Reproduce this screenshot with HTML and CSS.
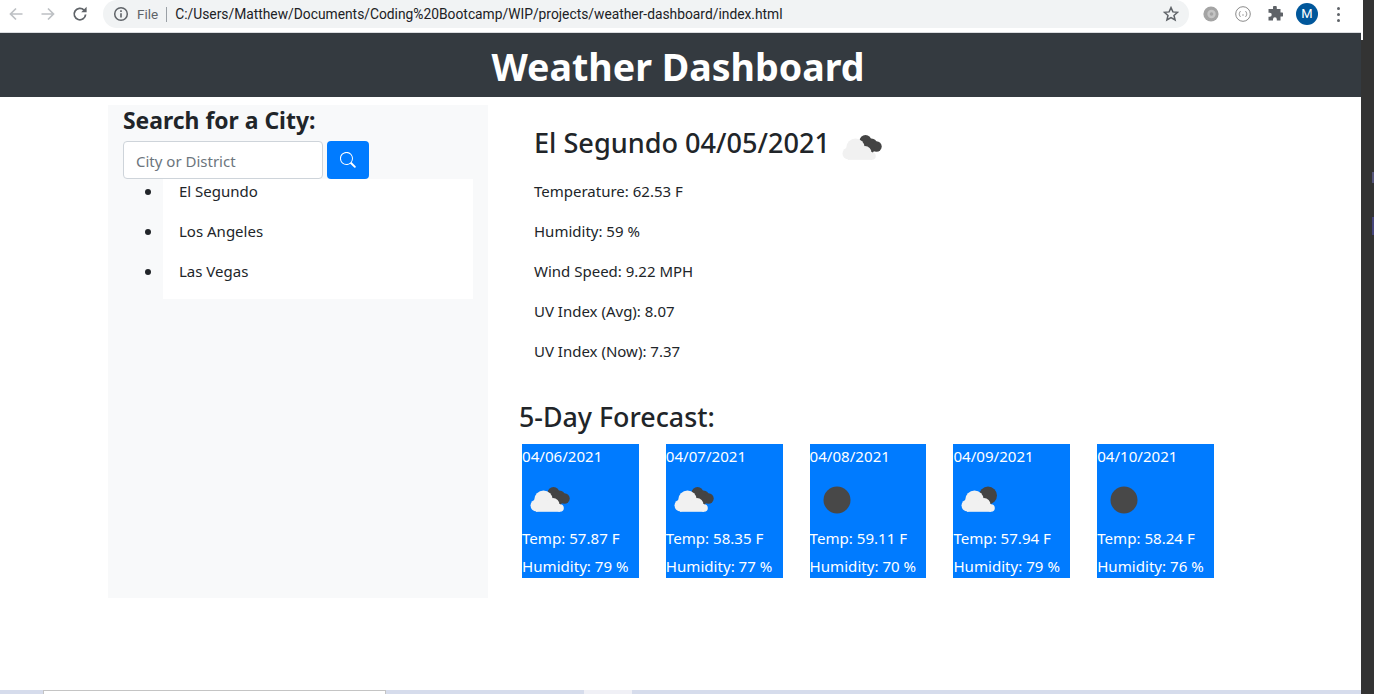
FILE: index.html
```html
<!DOCTYPE html>
<html lang="en">
<head>
<meta charset="utf-8">
<title>Weather Dashboard</title>
<link rel="stylesheet" href="styles.css">
</head>
<body>
<svg class="defs" width="0" height="0" aria-hidden="true">
  <defs>
    <g id="cloud-shape" fill="#f1f1f1">
      <circle cx="12.500" cy="30.500" r="6"/>
      <circle cx="19.500" cy="24.800" r="9.300"/>
      <circle cx="29" cy="29.500" r="6.500"/>
      <circle cx="36" cy="33" r="3.800"/>
      <rect x="12" y="29" width="24" height="7.800"/>
    </g>
    <symbol id="cloud-pair" viewBox="0 0 50 50">
      <g fill="#444">
        <circle cx="29.500" cy="18" r="6"/>
        <circle cx="35.500" cy="21" r="5.500"/>
        <circle cx="40.500" cy="23.500" r="5.200"/>
        <circle cx="33" cy="25" r="6"/>
      </g>
      <use href="#cloud-shape"/>
    </symbol>
    <symbol id="cloud-sun" viewBox="0 0 50 50">
      <circle fill="#444" cx="33" cy="20.500" r="9"/>
      <use href="#cloud-shape"/>
    </symbol>
    <symbol id="sun" viewBox="0 0 50 50">
      <circle fill="#484848" cx="25" cy="25" r="13.500"/>
    </symbol>
  </defs>
</svg>
<div class="screen">
  <div class="window">
    <div class="toolbar">
      <div class="nav-icons">
        <svg class="tb-icon" viewBox="0 0 16 16"><path class="stroke-light" d="M14.500 8H2.500M8 2.500 2.500 8 8 13.500"/></svg>
        <svg class="tb-icon" viewBox="0 0 16 16"><path class="stroke-light" d="M1.500 8h12M8 2.500 13.500 8 8 13.500"/></svg>
        <svg class="tb-icon" viewBox="0 0 16 16"><path class="stroke-dark" d="M13.600 8.500A5.700 5.700 0 1 1 12 4.100"/><path class="fill-dark" d="M9.200 6.200H14.600V.8z"/></svg>
      </div>
      <div class="omnibox">
        <svg class="info-icon" viewBox="0 0 16 16"><circle class="info-ring" cx="8" cy="8" r="6.300"/><path class="info-mark" d="M8 7.200v4.300M8 4.300v1.600"/></svg>
        <span class="scheme">File</span>
        <span class="url">C:/Users/Matthew/Documents/Coding%20Bootcamp/WIP/projects/weather-dashboard/index.html</span>
        <svg class="star-icon" viewBox="0 0 16 16"><path class="star" d="m8 1.600 1.900 4.300 4.700.4-3.600 3.100 1.100 4.600L8 11.600l-4.100 2.400L5 9.400 1.400 6.300l4.700-.4z"/></svg>
      </div>
      <div class="ext-icons">
        <svg class="ext" viewBox="0 0 16 16"><circle class="ext-a" cx="8" cy="8" r="7.600"/><circle class="ext-b" cx="8.500" cy="8" r="4.200"/><circle class="ext-a" cx="8.500" cy="8" r="1.800"/></svg>
        <svg class="ext" viewBox="0 0 16 16"><circle class="ext-ring" cx="8" cy="8" r="7.300"/><path class="ext-code" d="M5.600 5.500q-1 0-1 1v.8l-.8.700.8.700v.8q0 1 1 1M10.400 5.500q1 0 1 1v.8l.8.700-.8.700v.8q0 1-1 1M7.200 9h1.600"/></svg>
        <svg class="ext" viewBox="0 0 16 16"><path class="puzzle" d="M6 1.500a1.900 1.900 0 0 1 3.800 0V3h3.700v3.500H15a2 2 0 0 1 0 4h-1.500v4H9.800v-1.300a1.900 1.900 0 0 0-3.800 0v1.300H1.500v-3.700h1.200a2 2 0 0 0 0-4H1.500V3H6z"/></svg>
        <span class="avatar">M</span>
        <span class="kebab"><i></i><i></i><i></i></span>
      </div>
    </div>
    <header class="site-header"><h1>Weather Dashboard</h1></header>
    <main class="content">
      <aside class="sidebar">
        <h4 class="search-title">Search for a City:</h4>
        <form class="search-form">
          <input class="search-input" type="text" placeholder="City or District">
          <button class="search-btn" type="button" aria-label="Search">
            <svg viewBox="0 0 16 16"><path class="search-glyph" d="M11.700 10.300a6.500 6.500 0 1 0-1.400 1.400l3.900 3.900a1 1 0 0 0 1.400-1.400zM6.500 12A5.500 5.500 0 1 1 6.500 1a5.500 5.500 0 0 1 0 11z"/></svg>
          </button>
        </form>
        <ul class="city-list">
          <li>El Segundo</li>
          <li>Los Angeles</li>
          <li>Las Vegas</li>
        </ul>
      </aside>
      <section class="weather">
        <div class="today">
          <div class="today-head">
            <h2>El Segundo 04/05/2021</h2>
            <svg class="today-icon"><use href="#cloud-pair"/></svg>
          </div>
          <p>Temperature: 62.53 F</p>
          <p>Humidity: 59 %</p>
          <p>Wind Speed: 9.22 MPH</p>
          <p>UV Index (Avg): 8.07</p>
          <p>UV Index (Now): 7.37</p>
        </div>
        <h3 class="forecast-title">5-Day Forecast:</h3>
        <div class="forecast">
          <article class="day">
            <div>04/06/2021</div>
            <svg class="day-icon"><use href="#cloud-pair"/></svg>
            <div class="temp">Temp: 57.87 F</div>
            <div>Humidity: 79 %</div>
          </article>
          <article class="day">
            <div>04/07/2021</div>
            <svg class="day-icon"><use href="#cloud-pair"/></svg>
            <div class="temp">Temp: 58.35 F</div>
            <div>Humidity: 77 %</div>
          </article>
          <article class="day">
            <div>04/08/2021</div>
            <svg class="day-icon"><use href="#sun"/></svg>
            <div class="temp">Temp: 59.11 F</div>
            <div>Humidity: 70 %</div>
          </article>
          <article class="day">
            <div>04/09/2021</div>
            <svg class="day-icon"><use href="#cloud-sun"/></svg>
            <div class="temp">Temp: 57.94 F</div>
            <div>Humidity: 79 %</div>
          </article>
          <article class="day">
            <div>04/10/2021</div>
            <svg class="day-icon"><use href="#sun"/></svg>
            <div class="temp">Temp: 58.24 F</div>
            <div>Humidity: 76 %</div>
          </article>
        </div>
      </section>
    </main>
    <div class="tabstrip">
      <span class="seg-a"></span><span class="seg-tab"></span><span class="seg-b"></span><span class="seg-c"></span><span class="seg-d"></span>
    </div>
  </div>
  <div class="side-strip"><span class="notch"></span><span class="mark-a"></span><span class="mark-b"></span></div>
</div>
</body>
</html>
```

FILE: styles.css
```css
* { box-sizing: border-box; }
html, body { margin: 0; height: 100%; overflow: hidden; background: #fff; }
body { font-family: "Noto Sans", "Open Sans", sans-serif; font-size: 15px; line-height: 24px; color: #212529; }
.defs { position: absolute; }
.screen { display: flex; width: 1374px; height: 694px; }
.window { width: 1361px; height: 694px; display: flex; flex-direction: column; }

.toolbar { height: 33px; border-bottom: 1px solid #dadce0; display: flex; align-items: flex-start; background: #fff; flex: none; }
.nav-icons { display: flex; width: 103px; padding: 6px 0 0 8px; gap: 16px; flex: none; }
.tb-icon { width: 16px; height: 16px; flex: none; }
.stroke-light { fill: none; stroke: #bdc0c4; stroke-width: 1.700; }
.stroke-dark { fill: none; stroke: #5f6368; stroke-width: 1.800; }
.fill-dark { fill: #5f6368; }
.omnibox { width: 1086px; height: 28px; background: #f1f3f4; border-radius: 14px; display: flex; align-items: center; padding-left: 10px; padding-right: 10px; flex: none; }
.info-icon { width: 16px; height: 16px; flex: none; }
.info-ring { fill: none; stroke: #5f6368; stroke-width: 1.500; }
.info-mark { fill: none; stroke: #5f6368; stroke-width: 1.600; }
.scheme { margin-left: 8px; padding-right: 8px; font-family: "Roboto", sans-serif; font-size: 13.500px; color: #5f6368; line-height: 15px; border-right: 1px solid #9aa0a6; }
.url { margin-left: 8px; font-family: "Roboto", sans-serif; font-size: 13.820px; color: #202124; white-space: nowrap; }
.star-icon { width: 16px; height: 16px; margin-left: auto; flex: none; }
.star { fill: none; stroke: #5f6368; stroke-width: 1.500; }
.ext-icons { display: flex; align-items: center; height: 28px; margin-left: 14px; flex: none; }
.ext { width: 16px; height: 16px; flex: none; margin-right: 16px; }
.ext-a { fill: #a4a4a4; }
.ext-b { fill: #c4c4c4; }
.ext-ring { fill: #fff; stroke: #8a8a8a; stroke-width: 1; }
.ext-code { fill: none; stroke: #777; stroke-width: .8; }
.puzzle { fill: #5f6368; }
.avatar { width: 22px; height: 22px; border-radius: 50%; background: #01579b; color: #fff; font-family: "Roboto", sans-serif; font-size: 13px; line-height: 22px; text-align: center; margin-left: -3px; }
.kebab { display: flex; flex-direction: column; gap: 3px; margin-left: 19px; }
.kebab i { display: block; width: 3px; height: 3px; border-radius: 50%; background: #5f6368; }

.site-header { height: 64px; background: #343a40; color: #fff; text-align: center; padding-right: 5px; flex: none; }
.site-header h1 { margin: 0; font-size: 37.600px; line-height: 68px; font-weight: 700; }

.content { flex: 1; display: flex; align-items: flex-start; padding: 8px 0 0 108px; min-height: 0; }
.sidebar { width: 380px; height: 493px; background: #f8f9fa; padding: 0 15px; flex: none; }
.search-title { margin: 0; font-size: 22.900px; line-height: 31px; padding-bottom: 5px; font-weight: 700; }
.search-form { display: flex; gap: 4px; }
.search-input { width: 200px; height: 38px; padding: 7px 12px 5px; border: 1px solid #ced4da; border-radius: 4px; font: inherit; color: #495057; background: #fff; }
.search-input::placeholder { color: #6c757d; opacity: 1; }
.search-btn { width: 42px; height: 38px; border: 0; border-radius: 4px; background: #007bff; padding: 0; display: flex; align-items: center; justify-content: center; }
.search-btn svg { width: 16px; height: 16px; }
.search-glyph { fill: #fff; }
.city-list { list-style: none; margin: 0; padding: 0 0 0 40px; }
.city-list li { position: relative; background: #fff; height: 40px; padding: 0 16px 16px; margin: 0; width: 310px; }
.city-list li::before { content: ""; position: absolute; left: -18px; top: 10px; width: 6px; height: 6px; border-radius: 50%; background: #212529; }

.weather { padding-left: 31px; flex: 1; }
.today { padding: 11px 0 0 15px; }
.today-head { display: flex; align-items: flex-start; height: 54px; margin-bottom: 9px; }
.today h2 { margin: 0; font-size: 27.100px; line-height: 54px; font-weight: 500; white-space: nowrap; }
.today-icon { width: 50px; height: 50px; margin: 7px 0 0 6px; flex: none; }
.today p { margin: 0 0 16px; }
.forecast-title { margin: 39px 0 0; font-size: 26.800px; line-height: 30px; font-weight: 500; height: 42px; }
.forecast { display: flex; gap: 27px; padding-left: 3px; }
.day { width: 116.800px; height: 134px; background: #007bff; color: #fff; white-space: nowrap; flex: none; font-size: 15.100px; }
.day-icon { display: block; width: 50px; height: 50px; margin: 7px 0 1px 2px; }
.temp { margin-bottom: 4px; }

.tabstrip { height: 4px; display: flex; flex: none; }
.seg-a { width: 43px; background: #d6dcec; }
.seg-tab { width: 343px; background: #fff; border: 1px solid #c4c4c4; border-bottom: 0; }
.seg-b { width: 198px; background: #d6dcec; }
.seg-c { width: 48px; background: #f0f0f6; }
.seg-d { flex: 1; background: #d6dcec; }

.side-strip { position: relative; width: 13px; height: 694px; background: #333; }
.notch { position: absolute; left: 0; top: 0; width: 2px; height: 40px; background: #fff; }
.mark-a { position: absolute; right: 0; top: 172px; width: 2px; height: 11px; background: #55557a; }
.mark-b { position: absolute; right: 0; top: 217px; width: 2px; height: 18px; background: #46467c; }
```
